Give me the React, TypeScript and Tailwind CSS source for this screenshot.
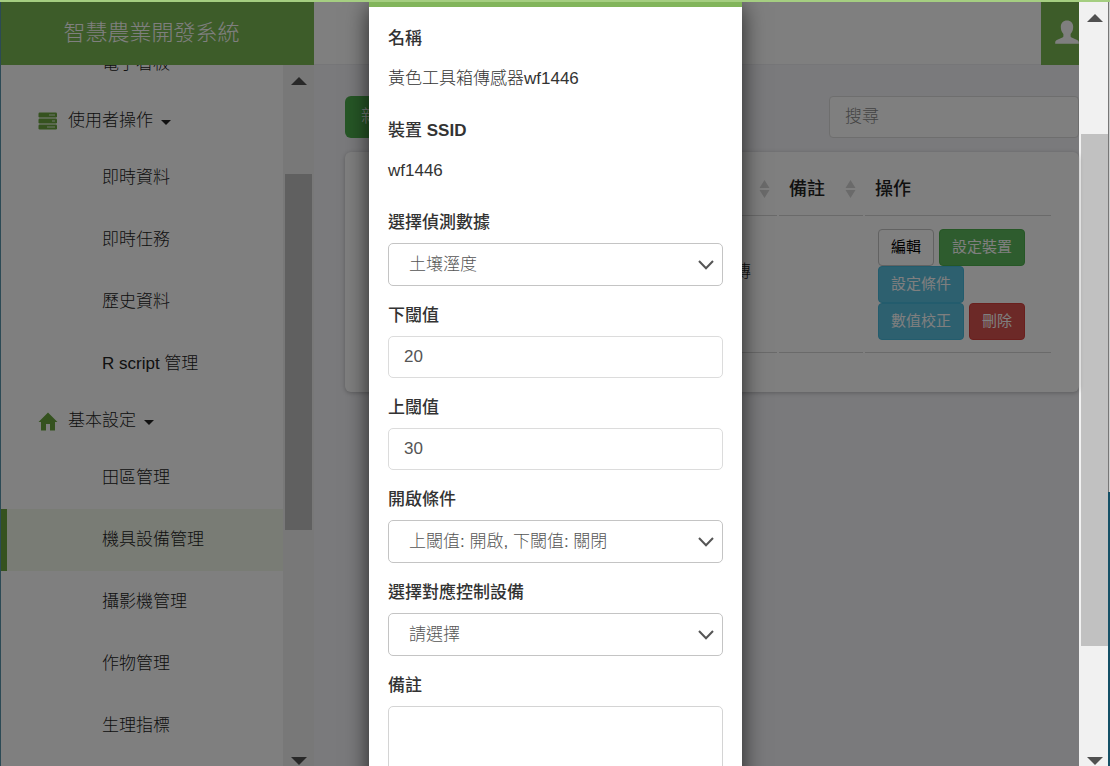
import type { ReactNode } from "react";
import clsx from "clsx";

const userLinks = ["即時資料", "即時任務", "歷史資料", "R script 管理"];
const settingLinks = ["田區管理", "機具設備管理", "攝影機管理", "作物管理", "生理指標"];
const activeLink = "機具設備管理";

const buttonBase = "h-[37px] rounded border px-3 text-[15px] font-normal";

function ServerIcon() {
  return (
    <svg className="h-[18px] w-5 text-[#6aa53f]" viewBox="0 0 20 18" fill="currentColor" aria-hidden="true">
      <rect x="0.5" y="0.5" width="18.500" height="5" rx="1.2" />
      <rect x="0.5" y="6.5" width="18.500" height="5" rx="1.2" />
      <rect x="0.5" y="12.5" width="18.500" height="5" rx="1.2" />
      <path d="M11 3h6M14 9h3M9 15h8" stroke="#fff" strokeWidth="0.8" fill="none" />
    </svg>
  );
}

function HomeIcon() {
  return (
    <svg className="h-[19px] w-5 text-[#6aa53f]" viewBox="0 0 20 19" fill="currentColor" aria-hidden="true">
      <path d="M10 0.5L19.5 10H17v8.5h-5V12H8v6.5H3V10H0.5Z" />
    </svg>
  );
}

function UserIcon() {
  return (
    <svg className="h-6 w-6 shrink-0 text-white" viewBox="0 0 24 24" fill="currentColor" aria-hidden="true">
      <path d="M12 0.5c3.800 0 6.200 2.500 6.200 6.300 0 3.300-1 5.600-2.600 7.200v1.900c0 .8.300 1.200 1 1.500l5.600 2.700c1 .5 1.600 1.300 1.600 2.400v1.200H.2v-1.200c0-1.100.6-1.900 1.600-2.400l5.600-2.700c.7-.3 1-.7 1-1.500V14C6.800 12.400 5.800 10.100 5.800 6.800 5.800 3 8.200.5 12 .5Z" />
    </svg>
  );
}

function SortIcon() {
  return (
    <svg className="h-[18px] w-[11px] text-[#d4d4d4]" viewBox="0 0 11 18" fill="currentColor" aria-hidden="true">
      <path d="M5.500 0L10.500 8H.5ZM5.500 18L.5 10h10Z" />
    </svg>
  );
}

function ScrollArrow({ down = false }: { down?: boolean }) {
  return (
    <svg
      className="h-2 w-4 shrink-0 text-[#505050]"
      viewBox="0 0 16 8"
      fill="currentColor"
      aria-hidden="true"
    >
      <path d={down ? "M0 0H16L8 8Z" : "M0 8H16L8 0Z"} />
    </svg>
  );
}

function NavSection({ icon, label, links }: { icon: ReactNode; label: string; links: string[] }) {
  return (
    <li>
      <button type="button" className="flex h-[52px] w-full items-center pl-[37px]">
        {icon}
        <span className="ml-[10px]">{label}</span>
        <svg className="mt-[2px] ml-2 h-[5px] w-[10px]" viewBox="0 0 10 5" fill="currentColor" aria-hidden="true">
          <path d="M0 0H10L5 5Z" />
        </svg>
      </button>
      <ul>
        {links.map((link) => (
          <li key={link}>
            <a
              href="#"
              className={clsx(
                "flex h-[62px] items-center border-l-6 pl-[95px]",
                link === activeLink ? "border-[#6aa53f] bg-[#f3f8ea]" : "border-transparent"
              )}
            >
              {link}
            </a>
          </li>
        ))}
      </ul>
    </li>
  );
}

function Sidebar() {
  return (
    <aside className="flex w-[313px] shrink-0 flex-col bg-white">
      <h1 className="flex h-[63px] shrink-0 items-center justify-center bg-[#7ab852] pr-3 pb-[2px] text-[22px] text-white">
        智慧農業開發系統
      </h1>
      <div className="flex min-h-0 flex-1">
        <nav className="flex-1 overflow-hidden">
          <ul className="-mt-8">
            <li>
              <a href="#" className="flex h-[62px] items-center pl-[101px]">
                電子看板
              </a>
            </li>
            <NavSection icon={<ServerIcon />} label="使用者操作" links={userLinks} />
            <NavSection icon={<HomeIcon />} label="基本設定" links={settingLinks} />
          </ul>
        </nav>
        <div className="flex w-[31px] flex-col items-center bg-[#f1f1f1] pt-3 pb-[1px]">
          <ScrollArrow />
          <div className="mt-[89px] h-[356px] w-[27px] bg-[#c1c1c1]" />
          <div className="mt-auto">
            <ScrollArrow down />
          </div>
        </div>
      </div>
    </aside>
  );
}

function DeviceTable() {
  const cell = "border-b border-[#d4d4d4]";
  return (
    <table className="w-full table-fixed border-separate border-spacing-x-[2px] border-spacing-y-0">
      <colgroup>
        <col />
        <col className="w-[139px]" />
        <col className="w-[84px]" />
        <col className="w-[186px]" />
      </colgroup>
      <thead>
        <tr className="h-[53px] text-left text-lg">
          <th className={clsx(cell, "font-medium")}>編號</th>
          <th className={clsx(cell, "pr-[7px] pl-[10px] font-medium")}>
            <span className="flex items-center justify-between">
              名稱
              <SortIcon />
            </span>
          </th>
          <th className={clsx(cell, "pr-[7px] pl-[10px] font-medium")}>
            <span className="flex items-center justify-between">
              備註
              <SortIcon />
            </span>
          </th>
          <th className={clsx(cell, "pl-[10px] font-medium")}>操作</th>
        </tr>
      </thead>
      <tbody>
        <tr className="h-[137px]">
          <td className={cell}>1</td>
          <td className={clsx(cell, "pl-[11px] leading-[25px]")}>
            黃色工具箱傳
            <br />
            感器wf1446
          </td>
          <td className={cell} />
          <td className={clsx(cell, "px-[13px]")}>
            <div className="flex flex-wrap gap-x-[5px]">
              <button type="button" className={clsx(buttonBase, "border-[#c4c4c4] bg-white text-black")}>
                編輯
              </button>
              <button type="button" className={clsx(buttonBase, "border-[#4cae4c] bg-[#5cb85c] text-white")}>
                設定裝置
              </button>
              <button type="button" className={clsx(buttonBase, "border-[#46b8da] bg-[#5bc0de] text-white")}>
                設定條件
              </button>
              <button type="button" className={clsx(buttonBase, "border-[#46b8da] bg-[#5bc0de] text-white")}>
                數值校正
              </button>
              <button type="button" className={clsx(buttonBase, "border-[#d43f3a] bg-[#d9534f] text-white")}>
                刪除
              </button>
            </div>
          </td>
        </tr>
      </tbody>
    </table>
  );
}

function MainPanel() {
  return (
    <main className="flex min-w-0 flex-1 flex-col bg-[#f4f4f8]">
      <header className="flex h-[63px] shrink-0 justify-end border-b border-[#ececf0] bg-white">
        <button
          type="button"
          aria-label="使用者"
          className="flex h-[63px] w-[38px] items-center overflow-hidden bg-[#7ab852] pb-[4px] pl-[14px]"
        >
          <UserIcon />
        </button>
      </header>
      <div className="flex flex-col gap-[14px] pt-[31px] pl-[31px]">
        <div className="flex justify-between">
          <button type="button" className="h-[42px] rounded-md bg-[#4cae4c] px-4 text-white">
            新增裝置
          </button>
          <input
            type="search"
            aria-label="搜尋"
            placeholder="搜尋"
            className="h-[42px] w-[250px] rounded border border-[#dcdcdc] bg-white px-[15px] placeholder:text-[#888]"
          />
        </div>
        <section className="h-[240px] rounded-md bg-white pt-[11px] pr-[26px] pl-[25px] shadow-[0_1px_4px_rgba(0,0,0,0.25)]">
          <DeviceTable />
        </section>
      </div>
    </main>
  );
}

function StaticField({ label, value }: { label: ReactNode; value: string }) {
  return (
    <div className="mb-[27px] leading-[25px]">
      <p className="mb-[15px] font-medium">{label}</p>
      <p>{value}</p>
    </div>
  );
}

function Field({ id, label, children }: { id: string; label: string; children: ReactNode }) {
  return (
    <div className="mb-[17px]">
      <label htmlFor={id} className="mb-2 block leading-[25px] font-medium">
        {label}
      </label>
      {children}
    </div>
  );
}

function SelectField({ id, label, options }: { id: string; label: string; options: string[] }) {
  return (
    <Field id={id} label={label}>
      <div className="relative">
        <select
          id={id}
          className="h-[43px] w-full appearance-none rounded-[5px] border border-[#c4c4c4] bg-white pr-10 pl-5 text-[#555]"
        >
          {options.map((option) => (
            <option key={option}>{option}</option>
          ))}
        </select>
        <svg
          className="pointer-events-none absolute top-4 right-[9px] h-3 w-4 text-[#555]"
          viewBox="0 0 16 12"
          fill="none"
          stroke="currentColor"
          strokeWidth="2"
          aria-hidden="true"
        >
          <path d="M1 2L8 9.300L15 2" />
        </svg>
      </div>
    </Field>
  );
}

function NumberField({ id, label, value }: { id: string; label: string; value: string }) {
  return (
    <Field id={id} label={label}>
      <input
        id={id}
        type="text"
        inputMode="numeric"
        defaultValue={value}
        className="h-[42px] w-full rounded-[5px] border border-[#dcdcdc] px-[15px] text-[#555]"
      />
    </Field>
  );
}

function ConditionDialog() {
  return (
    <div className="absolute inset-0 flex justify-center overflow-hidden bg-black/50 pl-[31px]">
      <div
        role="dialog"
        aria-label="設定條件"
        className="h-max w-[373px] border-t-5 border-[#82b55b] bg-white px-[19px] pt-[19px] pb-10 text-[#333] shadow-[0_5px_22px_rgba(0,0,0,0.7)]"
      >
        <StaticField label="名稱" value="黃色工具箱傳感器wf1446" />
        <StaticField
          label={
            <>
              裝置 <b className="font-bold">SSID</b>
            </>
          }
          value="wf1446"
        />
        <SelectField id="sensor" label="選擇偵測數據" options={["土壤溼度"]} />
        <NumberField id="lower" label="下閾值" value="20" />
        <NumberField id="upper" label="上閾值" value="30" />
        <SelectField id="trigger" label="開啟條件" options={["上閾值: 開啟, 下閾值: 關閉"]} />
        <SelectField id="device" label="選擇對應控制設備" options={["請選擇"]} />
        <Field id="note" label="備註">
          <textarea id="note" className="block h-24 w-full resize-none rounded-[5px] border border-[#d4d4d4] px-[15px]" />
        </Field>
      </div>
    </div>
  );
}

export default function App() {
  return (
    <div className="flex h-screen flex-col overflow-hidden border-t-2 border-[#a5ce81] font-['Liberation_Sans','Noto_Sans_CJK_TC',sans-serif] text-[17px] font-light text-[#222]">
      <div className="flex min-h-0 flex-1">
        <div className="w-px bg-[#2c4a55]" />
        <div className="relative flex min-w-0 flex-1">
          <Sidebar />
          <MainPanel />
          <ConditionDialog />
        </div>
        <div className="flex w-[29px] shrink-0 flex-col items-center bg-[#f1f1f1] pt-3 pb-[1px] pl-[2px]">
          <ScrollArrow />
          <div className="mt-28 h-[512px] w-full bg-[#c1c1c1]" />
          <div className="mt-auto">
            <ScrollArrow down />
          </div>
        </div>
        <div className="flex w-[2px] shrink-0 flex-col">
          <div className="h-[490px] border-l border-[#777] bg-[#d0d0d0]" />
          <div className="flex-1 bg-[#155066]" />
        </div>
      </div>
    </div>
  );
}
